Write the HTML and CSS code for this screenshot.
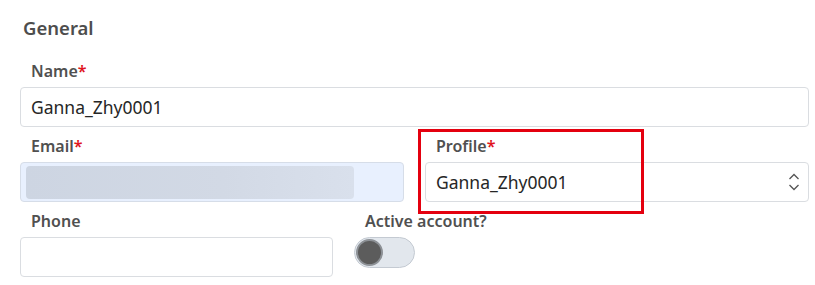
FILE: index.html
```html
<!DOCTYPE html>
<html>
<head>
<meta charset="utf-8">
<link rel="stylesheet" href="styles.css">
</head>
<body>
<div class="form">
  <h2 class="title">General</h2>
  <div class="row">
    <div class="field full">
      <label class="label">Name<span class="req">*</span></label>
      <div class="input">Ganna_Zhy0001</div>
    </div>
  </div>
  <div class="row">
    <div class="field half">
      <label class="label">Email<span class="req">*</span></label>
      <div class="input autofill"><div class="blur"></div></div>
    </div>
    <div class="field half annotated">
      <label class="label">Profile<span class="req">*</span></label>
      <div class="input select">Ganna_Zhy0001
        <svg class="chev" width="12" height="20" viewBox="0 0 12 20"><path d="M1.5 7 L6 2.5 L10.5 7 M1.5 13 L6 17.5 L10.5 13" fill="none" stroke="#555" stroke-width="1.3"/></svg>
      </div>
      <div class="highlight"></div>
    </div>
  </div>
  <div class="row">
    <div class="field phone">
      <label class="label">Phone</label>
      <div class="input"></div>
    </div>
    <div class="field active">
      <label class="label">Active account?</label>
      <div class="toggle"><div class="knob"></div></div>
    </div>
  </div>
</div>
</body>
</html>
```
FILE: styles.css
```css
* { box-sizing: border-box; }
body {
  margin: 0;
  background: #fff;
  font-family: "Noto Sans", "Open Sans", sans-serif;
}
.form {
  padding: 16px 6px 0 20px;
  width: 815px;
}
.title {
  margin: 0 0 0 3px;
  font-size: 18.5px;
  line-height: 24px;
  font-weight: 600;
  color: #4d4d4d;
  height: 44px;
}
.row {
  display: flex;
  gap: 21px;
  margin-bottom: 8px;
}
.field { position: relative; }
.full { width: 789px; }
.half { width: 384px; }
.phone { width: 313px; }
.label {
  display: block;
  padding-left: 11px;
  font-size: 16px;
  line-height: 22px;
  font-weight: 600;
  color: #505050;
  margin-bottom: 5px;
}
.req { color: #e0141e; }
.input {
  height: 40px;
  border: 1px solid #dadde1;
  border-radius: 4px;
  padding: 0 10px;
  font-size: 17.5px;
  line-height: 38px;
  color: #262626;
  background: #fff;
}
.autofill {
  background: #e8f0fe;
  border-color: #d6dde8;
  padding: 3px 5px;
}
.blur {
  width: 328px;
  height: 33px;
  border-radius: 4px;
  background: linear-gradient(90deg, #cdd5e2 0%, #d2d9e5 60%, #d9e0ec 100%);
}
.select { position: relative; }
.chev {
  position: absolute;
  right: 8px;
  top: 9px;
}
.highlight {
  position: absolute;
  left: -7px;
  top: -6px;
  width: 226px;
  height: 85px;
  border: 3px solid #e4000f;
  pointer-events: none;
}
.toggle {
  margin-top: 5px;
  width: 61px;
  height: 31px;
  border-radius: 16px;
  background: #e2e7ed;
  border: 1px solid #c4cad2;
  display: flex;
  align-items: center;
  padding-left: 1px;
}
.knob {
  width: 27px;
  height: 27px;
  border-radius: 50%;
  background: #5c5c5c;
  border: 2px solid #8d9196;
}
```
